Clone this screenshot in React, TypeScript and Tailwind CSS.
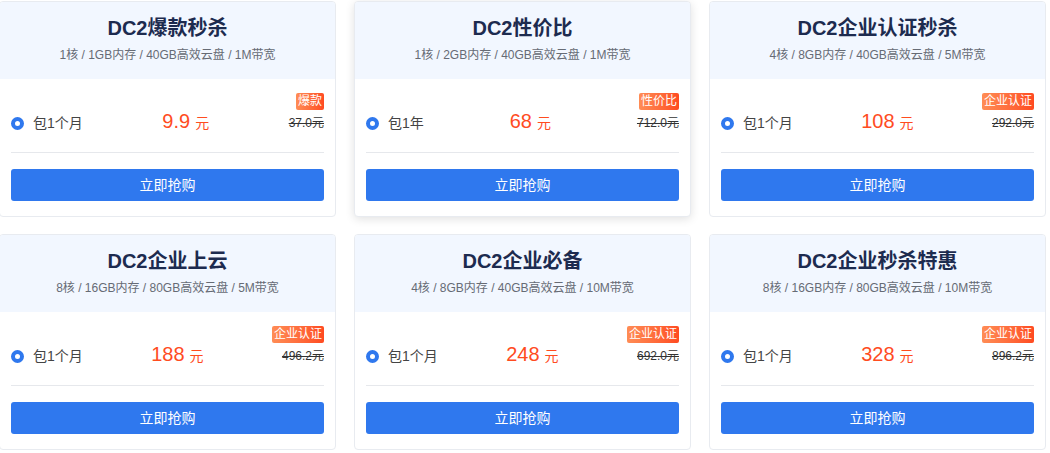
import React from "react";

const plans = [
  { id: 1, title: "DC2爆款秒杀", spec: "1核 / 1GB内存 / 40GB高效云盘 / 1M带宽", period: "包1个月", price: "9.9", origin: "37.0元", tag: "爆款" },
  { id: 2, title: "DC2性价比", spec: "1核 / 2GB内存 / 40GB高效云盘 / 1M带宽", period: "包1年", price: "68", origin: "712.0元", tag: "性价比", active: true },
  { id: 3, title: "DC2企业认证秒杀", spec: "4核 / 8GB内存 / 40GB高效云盘 / 5M带宽", period: "包1个月", price: "108", origin: "292.0元", tag: "企业认证" },
  { id: 4, title: "DC2企业上云", spec: "8核 / 16GB内存 / 80GB高效云盘 / 5M带宽", period: "包1个月", price: "188", origin: "496.2元", tag: "企业认证" },
  { id: 5, title: "DC2企业必备", spec: "4核 / 8GB内存 / 40GB高效云盘 / 10M带宽", period: "包1个月", price: "248", origin: "692.0元", tag: "企业认证" },
  { id: 6, title: "DC2企业秒杀特惠", spec: "8核 / 16GB内存 / 80GB高效云盘 / 10M带宽", period: "包1个月", price: "328", origin: "896.2元", tag: "企业认证" },
];

type Plan = (typeof plans)[number] & { active?: boolean };

const PlanCard: React.FC<{ plan: Plan }> = ({ plan }) => (
  <div
    className={`bg-white border border-[#e8ebf0] rounded-[4px] overflow-hidden ${
      plan.active ? "shadow-[0_2px_10px_rgba(0,0,0,0.12)]" : ""
    }`}
  >
    {/* Header */}
    <div className="h-[77px] bg-[#f2f7ff] pt-[12px] flex flex-col items-center">
      <div className="text-[20px] leading-[28px] font-bold text-[#1d2b4f]">{plan.title}</div>
      <div className="mt-[4px] text-[12px] leading-[18px] text-[#666b75]">{plan.spec}</div>
    </div>

    {/* Body */}
    <div className="px-[11px] pt-[14px] pb-[15px]">
      <div className="flex items-end justify-between">
        <div className="flex items-center h-[20px]">
          <span className="w-[13px] h-[13px] rounded-full border-[4px] border-[#2f78ee] bg-white" />
          <span className="ml-[9px] text-[14px] leading-[20px] text-[#444]">{plan.period}</span>
        </div>
        <div className="flex items-end text-[#ff4c1f]">
          <span className="text-[20px] leading-[24px]">{plan.price}</span>
          <span className="ml-[5px] text-[14px] leading-[20px]">元</span>
        </div>
        <div className="flex flex-col items-end">
          <span className="h-[17px] px-[2px] rounded-[2px] bg-gradient-to-r from-[#ff8c55] to-[#ff4a20] text-white text-[12px] leading-[17px]">
            {plan.tag}
          </span>
          <span className="mt-[3px] text-[12px] leading-[20px] text-[#333] line-through">{plan.origin}</span>
        </div>
      </div>

      <div className="mt-[19px] h-px bg-[#e6e8ec]" />

      <button className="mt-[16px] w-full h-[32px] rounded-[3px] bg-[#2f78ee] text-white text-[14px]">
        立即抢购
      </button>
    </div>
  </div>
);

export default function App() {
  return (
    <div className="w-[1050px] h-[453px] bg-white overflow-hidden font-['Liberation_Sans','Noto_Sans_CJK_SC',sans-serif]">
      <div className="ml-[-1px] pt-[1px] grid grid-cols-[337px_337px_337px] gap-x-[18px] gap-y-[17px]">
        {plans.map((p) => (
          <PlanCard key={p.id} plan={p} />
        ))}
      </div>
    </div>
  );
}
